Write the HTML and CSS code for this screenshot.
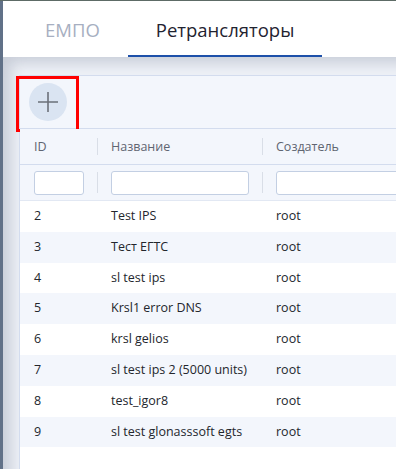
FILE: index.html
```html
<!DOCTYPE html>
<html lang="ru">
<head>
    <meta charset="UTF-8">
    <meta name="viewport" content="width=device-width, initial-scale=1.0">
    <title>Ретрансляторы</title>
    <link rel="stylesheet" href="styles.css">
</head>
<body>
    <div class="app">
        <div class="sidebar"></div>
        <div class="main">
            <div class="tabs">
                <div class="tab">ЕМПО</div>
                <div class="tab active">Ретрансляторы</div>
            </div>
            <div class="content">
                <div class="panel">
                    <div class="toolbar">
                        <button class="add-btn" title="Добавить">
                            <svg width="20" height="20" viewBox="0 0 20 20">
                                <path d="M10 0 V20 M0 10 H20" stroke="#6b7079" stroke-width="1.6" fill="none"/>
                            </svg>
                        </button>
                        <div class="highlight"></div>
                    </div>
                    <table class="grid">
                        <thead>
                            <tr class="head">
                                <th>ID</th>
                                <th>Название</th>
                                <th>Создатель</th>
                            </tr>
                            <tr class="filters">
                                <th><input type="text" class="f-id"></th>
                                <th><input type="text" class="f-name"></th>
                                <th><input type="text" class="f-owner"></th>
                            </tr>
                        </thead>
                        <tbody>
                            <tr><td>2</td><td>Test IPS</td><td>root</td></tr>
                            <tr><td>3</td><td>Тест ЕГТС</td><td>root</td></tr>
                            <tr><td>4</td><td>sl test ips</td><td>root</td></tr>
                            <tr><td>5</td><td>Krsl1 error DNS</td><td>root</td></tr>
                            <tr><td>6</td><td>krsl gelios</td><td>root</td></tr>
                            <tr><td>7</td><td>sl test ips 2 (5000 units)</td><td>root</td></tr>
                            <tr><td>8</td><td>test_igor8</td><td>root</td></tr>
                            <tr><td>9</td><td>sl test glonasssoft egts</td><td>root</td></tr>
                        </tbody>
                    </table>
                </div>
            </div>
        </div>
    </div>
</body>
</html>
```

FILE: styles.css
```css
html, body {
    margin: 0;
    padding: 0;
    height: 100%;
    overflow: hidden;
}

body {
    font-family: 'Open Sans', 'Noto Sans', Arial, sans-serif;
    background: #eef1f7;
    border-top: 1px solid #5d6b66;
    box-sizing: border-box;
}

.app {
    display: flex;
    height: 100%;
}

.sidebar {
    width: 3px;
    flex: none;
    background: #617188;
}

.main {
    flex: 1;
    display: flex;
    flex-direction: column;
    min-width: 0;
}

.tabs {
    height: 56px;
    background: #ffffff;
    display: flex;
    padding-left: 14px;
    flex: none;
}

.tab {
    padding: 1px 28px 0;
    font-size: 18.5px;
    line-height: 55px;
    color: #a7afc1;
    box-sizing: border-box;
    border-bottom: 2px solid transparent;
}

.tab.active {
    color: #1f2330;
    border-bottom-color: #1d50a9;
}

.content {
    flex: 1;
    padding: 18px 0 0 16px;
    background: #eef1f7;
    box-shadow: inset 14px 12px 14px -6px rgba(70, 80, 110, 0.22);
    min-height: 0;
}

.panel {
    width: 420px;
    height: 100%;
    background: #ffffff;
    border-top: 1px solid #d3dcee;
    border-left: 1px solid #d3dcee;
}

.toolbar {
    position: relative;
    background: #f3f6fc;
    padding: 7px 8px 7px 9px;
    border-bottom: 1px solid #d3dcee;
    display: flex;
}

.add-btn {
    width: 38px;
    height: 38px;
    border-radius: 50%;
    border: none;
    background: #dae4f2;
    padding: 0;
    display: flex;
    align-items: center;
    justify-content: center;
    cursor: pointer;
}

/* red annotation frame */
.highlight {
    position: absolute;
    left: -4px;
    top: 0;
    width: 57px;
    height: 50px;
    border: 3px solid #ff0000;
}

.grid {
    border-collapse: collapse;
    font-size: 12.5px;
    color: #23262d;
    table-layout: fixed;
    width: 407px;
}

.grid th, .grid td {
    text-align: left;
    padding: 0 0 0 14px;
    font-weight: normal;
    white-space: nowrap;
}

.grid th:nth-child(1) { width: 63px; }
.grid th:nth-child(2) { width: 151px; }

.head th {
    position: relative;
    height: 35px;
    background: #f3f6fc;
    color: #5f6571;
    border-bottom: 1px solid #d3dcee;
}

.filters th {
    position: relative;
    height: 35px;
    background: #f3f6fc;
    border-bottom: 1px solid #e2e8f3;
}

.head th + th::before,
.filters th + th::before {
    content: '';
    position: absolute;
    left: 0;
    width: 1px;
    background: #d9dee7;
}

.head th + th::before {
    top: 9px;
    bottom: 9px;
}

.filters th + th::before {
    top: 7px;
    bottom: 7px;
}

.filters input {
    display: block;
    box-sizing: border-box;
    height: 24px;
    width: calc(100% - 13px);
    border: 1px solid #c3cfe3;
    border-radius: 3px;
    background: #ffffff;
    outline: none;
}

.grid td {
    height: 30.8px;
    line-height: 30.8px;
}

.grid tbody tr:nth-child(even) td {
    background: #f3f6fc;
}
```
